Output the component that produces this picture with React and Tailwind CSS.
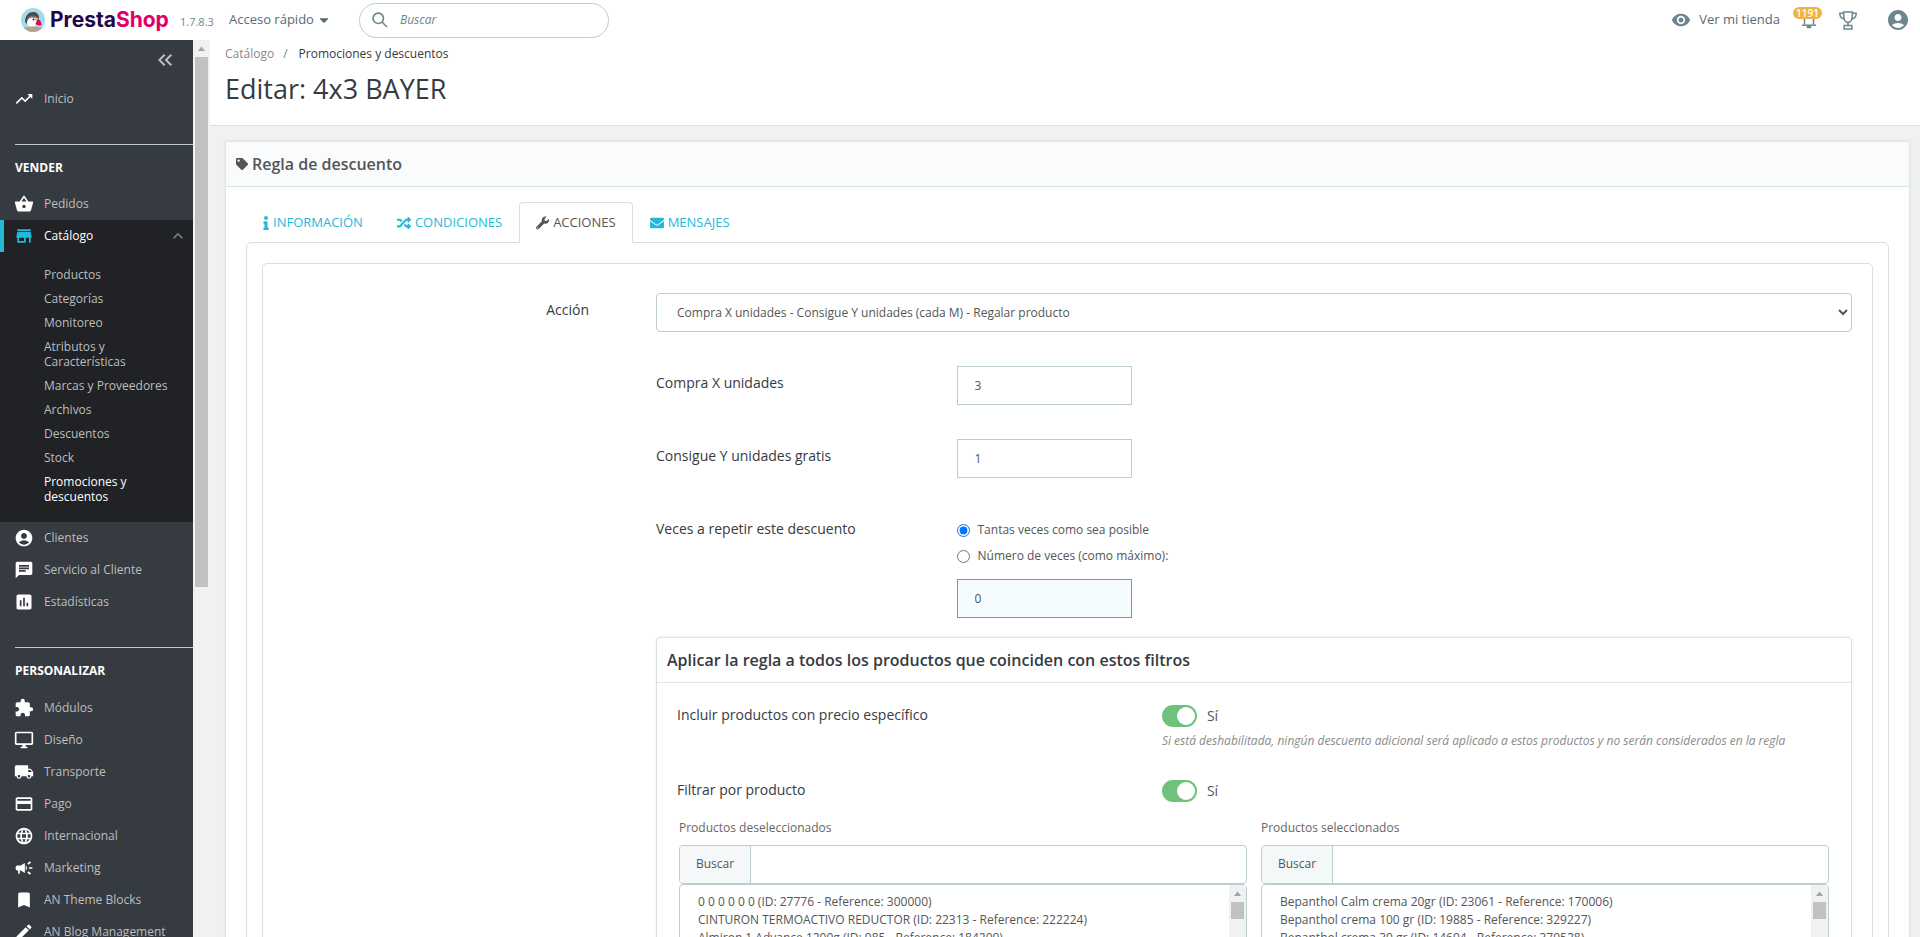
import React from 'react';
import {
  MdAccountCircle,
  MdAssessment,
  MdBookmark,
  MdCampaign,
  MdChat,
  MdCreate,
  MdExtension,
  MdKeyboardArrowUp,
  MdKeyboardDoubleArrowLeft,
  MdLanguage,
  MdLocalShipping,
  MdOutlineDesktopWindows,
  MdPayment,
  MdRemoveRedEye,
  MdShoppingBasket,
  MdStore,
  MdTrendingUp,
} from 'react-icons/md';
import { FaCaretDown, FaEnvelope, FaInfo, FaRandom, FaTag, FaWrench } from 'react-icons/fa';

const catalogLinks = [
  'Productos',
  'Categorías',
  'Monitoreo',
  'Atributos y Características',
  'Marcas y Proveedores',
  'Archivos',
  'Descuentos',
  'Stock',
];

const sellLinks = [
  { label: 'Clientes', icon: MdAccountCircle },
  { label: 'Servicio al Cliente', icon: MdChat },
  { label: 'Estadísticas', icon: MdAssessment },
];

const customizeLinks = [
  { label: 'Módulos', icon: MdExtension },
  { label: 'Diseño', icon: MdOutlineDesktopWindows },
  { label: 'Transporte', icon: MdLocalShipping },
  { label: 'Pago', icon: MdPayment },
  { label: 'Internacional', icon: MdLanguage },
  { label: 'Marketing', icon: MdCampaign },
  { label: 'AN Theme Blocks', icon: MdBookmark },
  { label: 'AN Blog Management', icon: MdCreate },
];

const tabs = [
  { label: 'INFORMACIÓN', icon: FaInfo, iconClass: 'w-[6px]' },
  { label: 'CONDICIONES', icon: FaRandom, iconClass: 'w-[14px]' },
  { label: 'ACCIONES', icon: FaWrench, iconClass: 'w-[13px]', active: true },
  { label: 'MENSAJES', icon: FaEnvelope, iconClass: 'w-[14px]' },
];

const unselected = [
  '0 0 0 0 0 0 (ID: 27776 - Reference: 300000)',
  'CINTURON TERMOACTIVO REDUCTOR (ID: 22313 - Reference: 222224)',
  'Almiron 1 Advance 1200g (ID: 985 - Reference: 184209)',
];

const selected = [
  'Bepanthol Calm crema 20gr (ID: 23061 - Reference: 170006)',
  'Bepanthol crema 100 gr (ID: 19885 - Reference: 329227)',
  'Bepanthol crema 30 gr (ID: 14694 - Reference: 379528)',
];

const PuffinLogo = () => (
  <svg className="w-6 h-6" viewBox="0 0 24 24">
    <clipPath id="puffin">
      <circle cx="12" cy="12" r="12" />
    </clipPath>
    <g clipPath="url(#puffin)">
      <rect width="24" height="24" fill="#a4dbe8" />
      <path d="M4 14C4 7 8 4 12.500 4c3 0 5 2 5.500 5l-2 8H7z" fill="#4a4a50" />
      <path d="M6 14c1-4 4-6 7-5 2 0 3 1 3 4 0 4-2 6-5 6-4 0-5-2-5-5z" fill="#fff" />
      <path d="M6 10c3-3 7-3 10-1l-2 1c-3-1-5-1-8 2z" fill="#6d6e73" />
      <circle cx="12.500" cy="11.500" r="1" fill="#222" />
      <path d="M14 9.500c2-1 4 1 4 4l-3.500-.5z" fill="#f2b13c" />
      <path d="M17 11c2 1 3.500 3 3.500 6-2 1-4 .5-6-1 .5-2 1.500-3 2.500-5z" fill="#df0067" />
      <path d="M2 20c4-2 15-2 20 0v4H2z" fill="#b6a28e" />
    </g>
  </svg>
);

const BellIcon = () => (
  <svg className="w-4 h-[19px]" viewBox="0 0 16 19" fill="none" stroke="#6c868e" strokeWidth="1.500">
    <path d="M3.500 14.500V8a4.500 4.500 0 0 1 9 0v6.500" />
    <path d="M1 15.200h14" />
    <path d="M6.500 16.500h3v1h-3z" fill="#6c868e" />
  </svg>
);

const TrophyIcon = () => (
  <svg className="w-[18px] h-[19px]" viewBox="0 0 18 19" fill="none" stroke="#6c868e" strokeWidth="1.500">
    <path d="M4.700 1h8.600v3.500c0 4-1.800 7-4.300 7s-4.300-3-4.300-7z" />
    <path d="M4.500 2.300H.8c0 3 1.700 5.300 4.700 6M13.500 2.300h3.700c0 3-1.700 5.300-4.700 6" />
    <path d="M9 11.500v3M5.200 14.500h7.600v3.600H5.200z" />
  </svg>
);

const SearchIcon = () => (
  <svg className="w-4 h-4" viewBox="0 0 16 16" fill="none" stroke="#6c868e" strokeWidth="1.600">
    <circle cx="6.300" cy="6.300" r="5.200" />
    <path d="M10 10l5 5" />
  </svg>
);

const SidebarLink = ({ label, icon: Icon }) => (
  <a href="#" className="flex items-center h-8 pl-[14px] gap-[10px] text-xs text-[#bebebe] whitespace-nowrap">
    <Icon className="w-5 h-5 text-white shrink-0" />
    {label}
  </a>
);

const SidebarTitle = ({ children }) => (
  <div className="ml-[15px] pt-[14px] border-t border-[#bbcdd2] text-xs leading-[18px] font-bold text-white">
    {children}
  </div>
);

const Sidebar = () => (
  <nav className="w-[193px] shrink-0 overflow-hidden bg-[#363a41]">
    <div className="flex justify-end pt-2 pr-4 text-[#bebebe]">
      <button type="button" aria-label="Contraer menú">
        <MdKeyboardDoubleArrowLeft className="w-6 h-6" />
      </button>
    </div>
    <div className="pt-[11px] pb-[29px]">
      <SidebarLink label="Inicio" icon={MdTrendingUp} />
    </div>
    <SidebarTitle>VENDER</SidebarTitle>
    <div className="pt-[11px]">
      <SidebarLink label="Pedidos" icon={MdShoppingBasket} />
    </div>
    <div className="bg-[#202226] pb-[18px]">
      <a href="#" className="flex items-center h-8 border-l-4 border-[#25b9d7] pl-[10px] pr-[5px] gap-[10px] text-xs font-medium text-white">
        <MdStore className="w-5 h-5 text-[#25b9d7]" />
        <span className="grow">Catálogo</span>
        <MdKeyboardArrowUp className="w-5 h-5 text-[#6c868e]" />
      </a>
      <ul className="flex flex-col gap-[9px] pt-[15px] pl-11 pr-5 text-xs leading-[15px] text-[#bebebe]">
        {catalogLinks.map((label) => (
          <li key={label}>
            <a href="#">{label}</a>
          </li>
        ))}
        <li>
          <a href="#" className="font-medium text-white">Promociones y descuentos</a>
        </li>
      </ul>
    </div>
    {sellLinks.map((link) => (
      <SidebarLink key={link.label} {...link} />
    ))}
    <div className="pt-[29px]">
      <SidebarTitle>PERSONALIZAR</SidebarTitle>
    </div>
    <div className="pt-3">
      {customizeLinks.map((link) => (
        <SidebarLink key={link.label} {...link} />
      ))}
    </div>
  </nav>
);

const ScrollUp = () => (
  <svg className="w-[17px] h-[17px] shrink-0" viewBox="0 0 17 17">
    <path d="M5 11l3.500-4.500L12 11z" fill="#a3a3a3" />
  </svg>
);

const Header = () => (
  <header className="flex items-center h-10 shrink-0 bg-white text-[#6c868e]">
    <a href="#" className="flex items-center gap-[5px] pl-[21px] w-[180px]">
      <PuffinLogo />
      <span className="font-[Inter] text-[21px] font-bold text-[#1f0847]">
        Presta<span className="text-[#df0067]">Shop</span>
      </span>
    </a>
    <span className="w-[49px] pt-1 text-[11px]">1.7.8.3</span>
    <button type="button" className="flex items-center gap-1 w-[130px] text-[13px] text-[#576c72]">
      Acceso rápido
      <FaCaretDown className="w-3 h-[14px] text-[#576c72]" />
    </button>
    <div className="flex items-center gap-3 w-[250px] h-[35px] px-3 border border-[#bbcdd2] rounded-full">
      <SearchIcon />
      <input
        type="text"
        aria-label="Buscar"
        placeholder="Buscar"
        className="min-w-0 grow text-xs outline-none placeholder:italic placeholder:text-[#6c868e]"
      />
    </div>
    <div className="flex items-center ml-auto pr-[10px]">
      <a href="#" className="flex items-center gap-2 mr-[13px] text-[13px] text-[#576c72]">
        <MdRemoveRedEye className="w-5 h-5 text-[#6c868e]" />
        Ver mi tienda
      </a>
      <button type="button" aria-label="Notificaciones" className="relative flex justify-center w-7 mr-[18px] pt-[3px] pb-1 pl-1">
        <BellIcon />
        <span className="absolute top-0 left-0 h-3 px-[3px] rounded-full bg-[#f1b340] text-[10px] leading-3 font-semibold text-white">
          1191
        </span>
      </button>
      <button type="button" aria-label="Logros" className="mr-[29px]">
        <TrophyIcon />
      </button>
      <button type="button" aria-label="Mi perfil">
        <MdAccountCircle className="w-6 h-6" />
      </button>
    </div>
  </header>
);

const NumberField = ({ id, label, value }) => (
  <div className="grid grid-cols-[1fr_3fr] gap-0.5">
    <label htmlFor={id} className="text-sm leading-[34px] text-[#363a41]">{label}</label>
    <input
      id={id}
      type="text"
      defaultValue={value}
      className="w-[175px] h-[39px] px-[17px] border border-[#bbcdd2] text-xs text-[#555]"
    />
  </div>
);

const SwitchField = ({ id, label, help }) => (
  <div className="grid grid-cols-[5fr_7fr] gap-[7px]">
    <label htmlFor={id} className="text-sm leading-[34px] text-[#363a41]">{label}</label>
    <div>
      <div className="flex items-center gap-[10px] h-[35px] text-sm text-[#555]">
        <input
          id={id}
          type="checkbox"
          role="switch"
          defaultChecked
          className="flex items-center appearance-none w-[35px] h-[22px] rounded-full bg-[#b3c7cd] checked:bg-[#70c17b] before:block before:w-[18px] before:h-[18px] before:ml-0.5 before:rounded-full before:bg-white checked:before:ml-[15px]"
        />
        <span>Sí</span>
      </div>
      {help && <p className="text-xs leading-4 italic text-[#8a8a8a]">{help}</p>}
    </div>
  </div>
);

const ProductPicker = ({ id, title, items }) => (
  <div className="min-w-0">
    <label htmlFor={id} className="block mb-2 text-xs leading-[18px] text-[#666]">{title}</label>
    <div className="flex h-[39px] border border-[#bbcdd2] rounded-[4px] text-xs text-[#555]">
      <label htmlFor={`${id}-search`} className="flex items-center pb-0.5 px-4 border-r border-[#bbcdd2] rounded-l-[3px] bg-[#f4f8f9]">
        Buscar
      </label>
      <input id={`${id}-search`} type="text" className="min-w-0 grow px-3" />
    </div>
    <div className="flex h-[200px] border border-[#bbcdd2] rounded-[4px]">
      <select id={id} multiple className="grow min-w-0 py-2 text-xs text-[#555] overflow-hidden outline-none [scrollbar-width:none]">
        {items.map((item) => (
          <option key={item} className="px-[18px] py-0 min-h-0 h-[18px] leading-[18px]">{item}</option>
        ))}
      </select>
      <div className="w-[17px] bg-[#f1f1f1]">
        <ScrollUp />
        <div className="mx-0.5 h-[17px] bg-[#c1c1c1]" />
      </div>
    </div>
  </div>
);

const FilterPanel = () => (
  <section className="mt-[19px] border border-[#dbdee0] rounded-[4px] shadow-[0_0_4px_rgba(0,0,0,0.06)]">
    <h3 className="px-[10px] border-b border-[#dbe6e9] text-base leading-[44px] font-semibold text-[#363a41]">
      Aplicar la regla a todos los productos que coinciden con estos filtros
    </h3>
    <div className="px-5 pt-[15px] pb-5">
      <SwitchField
        id="specific-price"
        label="Incluir productos con precio específico"
        help="Si está deshabilitada, ningún descuento adicional será aplicado a estos productos y no serán considerados en la regla"
      />
      <div className="mt-6">
        <SwitchField id="by-product" label="Filtrar por producto" />
      </div>
      <div className="grid grid-cols-2 gap-[14px] mt-[11px] mx-0.5">
        <ProductPicker id="unselected" title="Productos deseleccionados" items={unselected} />
        <ProductPicker id="selected" title="Productos seleccionados" items={selected} />
      </div>
    </div>
  </section>
);

const ActionForm = () => (
  <form className="flex gap-[60px] pl-[19px] pr-5 pt-[29px] pb-8 border border-[#dbdee0] rounded-[5px]">
    <label htmlFor="action" className="w-1/5 shrink-0 pr-[7px] text-right text-sm leading-[34px] text-[#363a41]">
      Acción
    </label>
    <div className="flex flex-col grow min-w-0">
      <select id="action" className="w-full h-[39px] px-4 border border-[#bbcdd2] rounded-[4px] bg-white text-xs text-[#555]">
        <option>Compra X unidades - Consigue Y unidades (cada M) - Regalar producto</option>
      </select>
      <div className="flex flex-col gap-[34px] mt-[34px]">
        <NumberField id="buy" label="Compra X unidades" value="3" />
        <NumberField id="get" label="Consigue Y unidades gratis" value="1" />
        <div className="grid grid-cols-[1fr_3fr] gap-0.5">
          <span id="repeat-label" className="text-sm leading-[34px] text-[#363a41]">Veces a repetir este descuento</span>
          <div role="radiogroup" aria-labelledby="repeat-label" className="pt-[5px] text-xs text-[#555]">
            <label className="flex items-center gap-2 h-[26px]">
              <input type="radio" name="repeat" defaultChecked />
              Tantas veces como sea posible
            </label>
            <label className="flex items-center gap-2 h-[26px]">
              <input type="radio" name="repeat" />
              Número de veces (como máximo):
            </label>
            <input
              type="text"
              aria-label="Número máximo de veces"
              defaultValue="0"
              className="block mt-[10px] w-[175px] h-[39px] px-[17px] border border-[#25b9d7] bg-[#f4fcfd]"
            />
          </div>
        </div>
      </div>
      <FilterPanel />
    </div>
  </form>
);

const App = () => (
  <div className="flex flex-col h-screen overflow-hidden bg-[#eff1f2] font-['Open_Sans',sans-serif]">
    <Header />
    <div className="flex grow min-h-0">
      <Sidebar />
      <div className="w-[17px] shrink-0 bg-[#f1f1f1]">
        <ScrollUp />
        <div className="h-[530px] mx-0.5 bg-[#c1c1c1]" />
      </div>
      <main className="grow min-w-0 overflow-hidden">
        <div className="h-[86px] px-[15px] pt-[5px] bg-white border-b border-[#dbdee0]">
          <nav className="flex gap-[9px] text-xs leading-[18px] text-[#363a41]">
            <a href="#" className="text-[#8a8a8a]">Catálogo</a>
            <span className="text-[#6c868e]">/</span>
            <a href="#" className="pl-0.5">Promociones y descuentos</a>
          </nav>
          <h1 className="mt-2 text-[27px] leading-[36px] text-[#363a41]">Editar: 4x3 BAYER</h1>
        </div>
        <div className="pt-[15px] pl-[15px] pr-[10px]">
          <section className="bg-white border border-[#dbe6e9] shadow-[0_0_4px_rgba(0,0,0,0.06)]">
            <h2 className="flex items-center gap-1 h-[45px] px-[10px] border-b border-[#dbe6e9] bg-[#fafbfc] text-base font-semibold text-[#555]">
              <FaTag className="w-3 h-3" />
              Regla de descuento
            </h2>
            <div className="px-5 pt-[15px] pb-5">
              <div role="tablist" className="flex -mb-px">
                {tabs.map(({ label, icon: Icon, iconClass, active }) => (
                  <button
                    key={label}
                    type="button"
                    role="tab"
                    aria-selected={Boolean(active)}
                    className={`relative flex items-center gap-1 h-[41px] px-4 border rounded-t-[4px] text-[13px] ${
                      active
                        ? 'border-[#dbdee0] border-b-white bg-white text-[#555]'
                        : 'border-transparent text-[#25b9d7]'
                    }`}
                  >
                    <Icon className={`h-[14px] ${iconClass}`} />
                    {label}
                  </button>
                ))}
              </div>
              <div className="px-[15px] pt-5 pb-5 border border-[#dbdee0] rounded-[5px]">
                <ActionForm />
              </div>
            </div>
          </section>
        </div>
      </main>
    </div>
  </div>
);

export default App;
